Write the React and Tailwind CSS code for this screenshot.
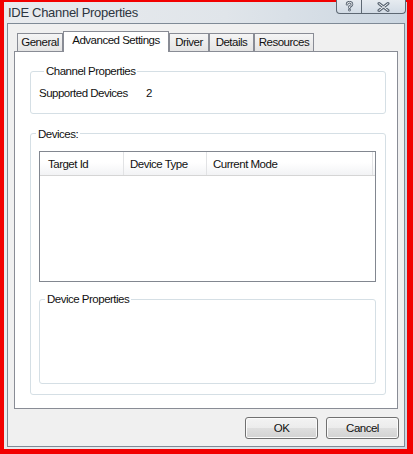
export default function App() {
  const txt = "text-[11.5px] leading-[13px] tracking-[-0.5px] text-[#111]";
  const tabBase =
    "flex items-center justify-center border border-b-0 border-[#898c95] " + txt;
  const inactive =
    tabBase + " h-[18px] mb-px bg-[linear-gradient(#f5f5f5,#e4e4e4)]";
  const btn =
    "w-[73px] h-[22px] flex items-center justify-center border border-[#707070] rounded-[3px] bg-[linear-gradient(#f3f3f3_0%,#ececec_48%,#dedede_52%,#d2d2d2_100%)] shadow-[inset_0_0_0_1px_#fbfbfb] " + txt;
  const legend = "ml-[5px] px-[2px] " + txt;
  return (
    <div className="w-[413px] h-[454px] bg-[#f20000] pt-[2px] pl-[4px] pr-[6px] pb-[5px] flex font-['Liberation_Sans',Arial,sans-serif]">
      <div className="flex-1 flex flex-col bg-[linear-gradient(90deg,#e9ebee_0%,#e0e5ea_55%,#cbd6e1_100%)]">
        {/* Title bar */}
        <div className="h-[21px] flex justify-between items-start">
          <div className="pl-[4px] pt-[3px] text-[13px] leading-[15px] tracking-[-0.3px] text-[#2d3540]">
            IDE Channel Properties
          </div>
          <div className="-mt-[2px] mr-[1px] flex h-[14px] border border-t-0 border-[#5d6873] rounded-b-[4px] overflow-hidden bg-[linear-gradient(#e6ebf0,#d2dbe5)]">
            <div className="w-[25px] flex items-center justify-center border-r border-[#5d6873]">
              <svg width="9" height="11" viewBox="0 0 9 11">
                <path d="M2 3.2 Q2 1.2 4.5 1.2 Q7 1.2 7 3.2 Q7 4.6 4.5 5.6 L4.5 6.6" fill="none" stroke="#5a6572" strokeWidth="2.6" strokeLinecap="round" />
                <circle cx="4.5" cy="9" r="1.4" fill="#5a6572" />
                <path d="M2 3.2 Q2 1.2 4.5 1.2 Q7 1.2 7 3.2 Q7 4.6 4.5 5.6 L4.5 6.6" fill="none" stroke="#f4f6f8" strokeWidth="0.9" strokeLinecap="round" />
                <circle cx="4.5" cy="9" r="0.5" fill="#f4f6f8" />
              </svg>
            </div>
            <div className="w-[43px] flex items-center justify-center">
              <svg width="13" height="10" viewBox="0 0 13 10">
                <path d="M2 1.5 L11 8.5 M11 1.5 L2 8.5" fill="none" stroke="#5a6572" strokeWidth="3" strokeLinecap="round" />
                <path d="M2 1.5 L11 8.5 M11 1.5 L2 8.5" fill="none" stroke="#f4f6f8" strokeWidth="1" strokeLinecap="round" />
              </svg>
            </div>
          </div>
        </div>

        {/* Client area */}
        <div className="flex-1 ml-[3px] mr-[2px] mb-[2px] border border-[#7f8a96] bg-[#f0f0f0] flex flex-col px-[6px] pt-[7px] pb-[7px]">
          {/* Tabs */}
          <div className="flex items-end ml-[3px] h-[21px] -mb-px relative z-10">
            <div className={inactive + " w-[46px]"}>General</div>
            <div className={tabBase + " w-[106px] h-[21px] bg-white pb-[3px]"}>Advanced Settings</div>
            <div className={inactive + " w-[40px]"}>Driver</div>
            <div className={inactive + " w-[45px]"}>Details</div>
            <div className={inactive + " w-[60px]"}>Resources</div>
          </div>

          {/* Tab page */}
          <div className="flex-1 border border-[#898c95] bg-white flex flex-col">
            <fieldset className="mt-[13px] ml-[15px] mr-[11px] border border-[#d5dfe5] rounded-[3px] pt-[9px] pb-[13px] pl-[8px]">
              <legend className={legend}>Channel Properties</legend>
              <div className={"flex " + txt}>
                <span className="w-[107px]">Supported Devices</span>
                <span>2</span>
              </div>
            </fieldset>

            <fieldset className="mt-[12px] ml-[15px] mr-[11px] border border-[#d5dfe5] rounded-[3px] pb-[10px]">
              <legend className={legend + " pt-[2px]"}>Devices:</legend>
              <div className="mt-[10px] ml-[8px] mr-[9px] h-[131px] border border-[#828790] bg-white">
                <div className={"flex h-[24px] border-b border-[#d5d5d5] bg-[linear-gradient(#ffffff_0%,#ffffff_45%,#f2f3f5_100%)] " + txt}>
                  <div className="w-[84px] border-r border-[#e2e3e5] pl-[8px] pt-[1px] flex items-center">Target Id</div>
                  <div className="w-[83px] border-r border-[#e2e3e5] pl-[6px] pt-[1px] flex items-center">Device Type</div>
                  <div className="w-[166px] border-r border-[#e2e3e5] pl-[6px] pt-[1px] flex items-center">Current Mode</div>
                </div>
              </div>
              <fieldset className="mt-[11px] ml-[8px] mr-[9px] h-[91px] border border-[#d5dfe5] rounded-[3px]">
                <legend className={legend}>Device Properties</legend>
              </fieldset>
            </fieldset>
          </div>

          {/* Buttons */}
          <div className="flex justify-end gap-[8px] mt-[8px] -mr-px">
            <button className={btn}>OK</button>
            <button className={btn}>Cancel</button>
          </div>
        </div>
      </div>
    </div>
  );
}
